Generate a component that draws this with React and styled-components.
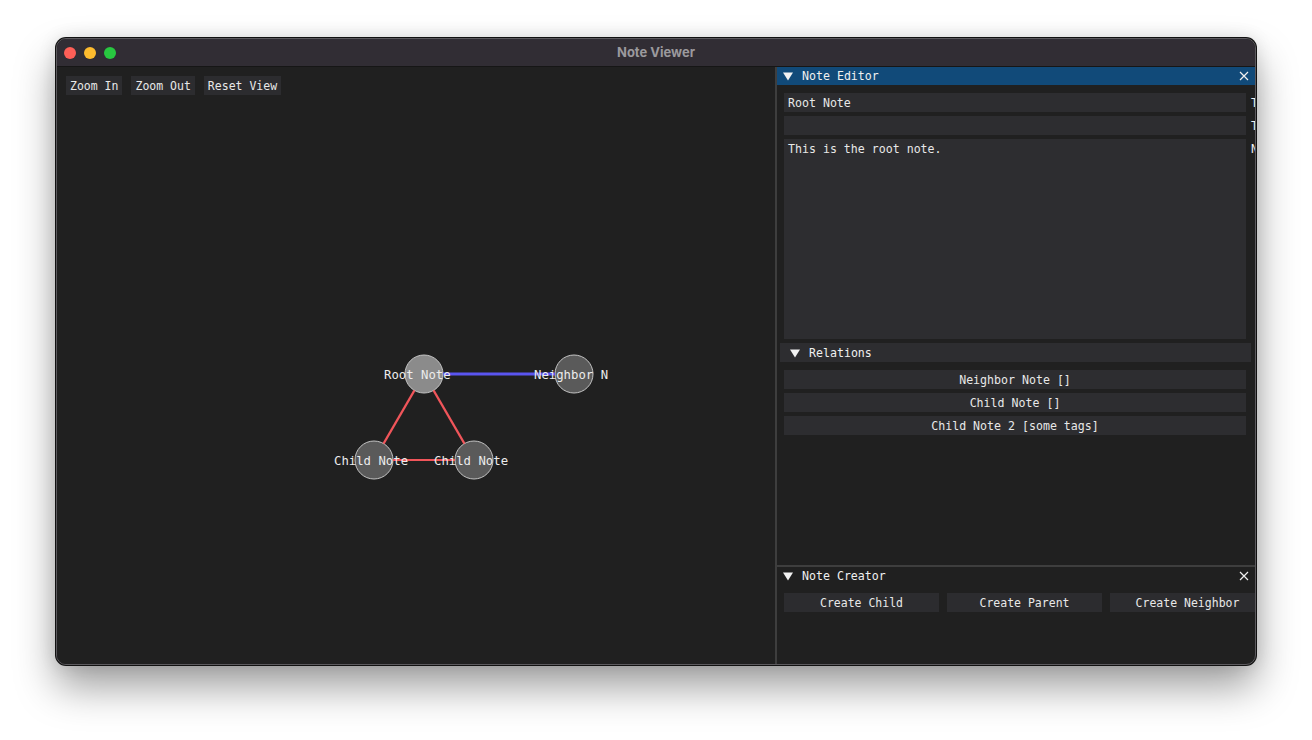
import React from "react";
import styled, {createGlobalStyle} from "styled-components";

const GlobalStyle = createGlobalStyle`
  html, body {
    margin: 0;
    padding: 0;
    background: #ffffff;
  }
  body {
    width: 1312px;
    height: 740px;
    overflow: hidden;
    font-family: "DejaVu Sans Mono", "Liberation Mono", monospace;
  }
`;

const Page = styled.div`
  display: flex;
  justify-content: center;
  padding-top: 38px;
`;

const Window = styled.div`
  width: 1200px;
  height: 627px;
  box-sizing: border-box;
  border-radius: 10px;
  border: 1px solid #5c5a5e;
  box-shadow: 0 0 0 1px #111, 0 22px 40px rgba(0, 0, 0, 0.38), 0 0 18px rgba(0, 0, 0, 0.12);
  overflow: hidden;
  display: flex;
  flex-direction: column;
  background: #202020;
`;

const TitleBar = styled.div`
  height: 27px;
  flex: none;
  background: #312d34;
  border-bottom: 1px solid #161616;
  display: flex;
  align-items: center;
  position: relative;
`;

const Lights = styled.div`
  display: flex;
  gap: 8px;
  padding-left: 7px;
`;

const Light = styled.span`
  width: 12px;
  height: 12px;
  border-radius: 50%;
  background: ${p => p.color};
`;

const Title = styled.div`
  position: absolute;
  left: 0;
  right: 0;
  top: 5px;
  text-align: center;
  font-family: Inter, "Liberation Sans", sans-serif;
  font-weight: 700;
  font-size: 13px;
  line-height: 16px;
  color: #9b999d;
  pointer-events: none;
`;

const Body = styled.div`
  flex: 1;
  display: flex;
  min-height: 0;
`;

const GraphPane = styled.div`
  width: 718px;
  flex: none;
  display: flex;
  flex-direction: column;
  background: #202020;
  border-right: 2px solid #3e3e3e;
`;

const Toolbar = styled.div`
  display: flex;
  gap: 9px;
  padding: 9px 9px 0;
`;

const Button = styled.div`
  height: 19px;
  box-sizing: border-box;
  padding: 1px 4px 0;
  background: #2c2c2f;
  color: #e8e8e8;
  font-size: 11.5px;
  line-height: 19px;
  white-space: pre;
  overflow: hidden;
  text-align: ${p => p.center ? "center" : "left"};
  flex: none;
  width: ${p => p.w ? p.w + "px" : "auto"};
`;

const Canvas = styled.svg`
  flex: 1;
  width: 100%;
  display: block;
  overflow: visible;
`;

const SidePane = styled.div`
  flex: 1;
  display: flex;
  flex-direction: column;
  min-width: 0;
  overflow: hidden;
`;

const Panel = styled.div`
  display: flex;
  flex-direction: column;
  flex: ${p => p.grow ? 1 : "none"};
  height: ${p => p.h ? p.h + "px" : "auto"};
  border-top: ${p => p.divided ? "2px solid #3e3e3e" : "none"};
  overflow: hidden;
`;

const PanelHeader = styled.div`
  height: 18px;
  flex: none;
  display: flex;
  align-items: center;
  background: ${p => p.active ? "#114a79" : "#202020"};
  color: #f0f0f0;
  font-size: 11.6px;
  padding: 0 6px 0 6px;
`;

const HeaderLabel = styled.span`
  flex: 1;
  padding-left: 9px;
  white-space: pre;
`;

const PanelBody = styled.div`
  display: flex;
  flex-direction: column;
  padding: 8px 0 0 7px;
  gap: 4px;
`;

const FieldRow = styled.div`
  display: flex;
  align-items: flex-start;
  gap: 5px;
  width: 520px;
`;

const Field = styled.div`
  width: 462px;
  height: ${p => p.h || 19}px;
  flex: none;
  box-sizing: border-box;
  background: #2d2d30;
  color: #e8e8e8;
  font-size: 11.6px;
  line-height: 19px;
  padding: 1px 4px 0;
  white-space: pre;
  text-align: ${p => p.center ? "center" : "left"};
`;

const FieldLabel = styled.span`
  color: #f0f0f0;
  font-size: 11.6px;
  line-height: 19px;
  height: 19px;
  padding-top: 1px;
  box-sizing: border-box;
`;

const SectionHeader = styled.div`
  height: 19px;
  width: 471px;
  margin-left: -4px;
  box-sizing: border-box;
  display: flex;
  align-items: center;
  background: #2d2d30;
  color: #f0f0f0;
  font-size: 11.6px;
  padding: 1px 0 0 10px;
  margin-bottom: 4px;
`;

const ButtonRow = styled.div`
  display: flex;
  gap: 8px;
`;

const Caret = () => (
  <svg width="10" height="9" viewBox="0 0 10 9">
    <polygon points="0,0.5 10,0.5 5,8.5" fill="#f2f2f2"/>
  </svg>
);

const Close = () => (
  <svg width="10" height="10" viewBox="0 0 10 10">
    <path d="M1 1 L9 9 M9 1 L1 9" stroke="#f0f0f0" strokeWidth="1.2"/>
  </svg>
);

const nodes = [
  {id: "root", x: 367, y: 279, label: "Root Note", fill: "#8b8b8b"},
  {id: "nb", x: 517, y: 279, label: "Neighbor N", fill: "#5a5a5a"},
  {id: "c1", x: 317, y: 365, label: "Child Note", fill: "#5a5a5a"},
  {id: "c2", x: 417, y: 365, label: "Child Note", fill: "#5a5a5a"},
];

const edges = [
  {a: "root", b: "nb", color: "#5a55f0", w: 3},
  {a: "root", b: "c1", color: "#f0555a", w: 2.2},
  {a: "root", b: "c2", color: "#f0555a", w: 2.2},
  {a: "c1", b: "c2", color: "#f0555a", w: 2.2},
];

const R = 19;

function Graph() {
  const byId = Object.fromEntries(nodes.map(n => [n.id, n]));
  return (
    <Canvas>
      {nodes.map(n => (
        <circle key={n.id} cx={n.x} cy={n.y} r={R} fill={n.fill} stroke="#c4c4c4" strokeWidth="1"/>
      ))}
      {edges.map((e, i) => {
        const a = byId[e.a], b = byId[e.b];
        const dx = b.x - a.x, dy = b.y - a.y;
        const len = Math.hypot(dx, dy);
        const ux = dx / len, uy = dy / len;
        return (
          <line key={i} x1={a.x + ux * R} y1={a.y + uy * R} x2={b.x - ux * R} y2={b.y - uy * R}
                stroke={e.color} strokeWidth={e.w}/>
        );
      })}
      {nodes.map(n => (
        <text key={n.id} x={n.x - 40} y={n.y + 5} fill="#ececec" fontSize="12.3"
              fontFamily="DejaVu Sans Mono, Liberation Mono, monospace">{n.label}</text>
      ))}
    </Canvas>
  );
}

export default function App() {
  return (
    <>
      <GlobalStyle/>
      <Page>
        <Window>
          <TitleBar>
            <Lights>
              <Light color="#fe5f57"/>
              <Light color="#febc2e"/>
              <Light color="#28c840"/>
            </Lights>
            <Title>Note Viewer</Title>
          </TitleBar>
          <Body>
            <GraphPane>
              <Toolbar>
                <Button>Zoom In</Button>
                <Button>Zoom Out</Button>
                <Button>Reset View</Button>
              </Toolbar>
              <Graph/>
            </GraphPane>
            <SidePane>
              <Panel h={498}>
                <PanelHeader active>
                  <Caret/>
                  <HeaderLabel>Note Editor</HeaderLabel>
                  <Close/>
                </PanelHeader>
                <PanelBody>
                  <FieldRow>
                    <Field>Root Note</Field>
                    <FieldLabel>Title</FieldLabel>
                  </FieldRow>
                  <FieldRow>
                    <Field/>
                    <FieldLabel>Tags</FieldLabel>
                  </FieldRow>
                  <FieldRow>
                    <Field h={200}>This is the root note.</Field>
                    <FieldLabel>Note</FieldLabel>
                  </FieldRow>
                  <SectionHeader>
                    <Caret/>
                    <HeaderLabel>Relations</HeaderLabel>
                  </SectionHeader>
                  <Field center>Neighbor Note []</Field>
                  <Field center>Child Note []</Field>
                  <Field center>Child Note 2 [some tags]</Field>
                </PanelBody>
              </Panel>
              <Panel grow divided>
                <PanelHeader>
                  <Caret/>
                  <HeaderLabel>Note Creator</HeaderLabel>
                  <Close/>
                </PanelHeader>
                <PanelBody>
                  <ButtonRow>
                    <Button center w={155}>Create Child</Button>
                    <Button center w={155}>Create Parent</Button>
                    <Button center w={155}>Create Neighbor</Button>
                  </ButtonRow>
                </PanelBody>
              </Panel>
            </SidePane>
          </Body>
        </Window>
      </Page>
    </>
  );
}
